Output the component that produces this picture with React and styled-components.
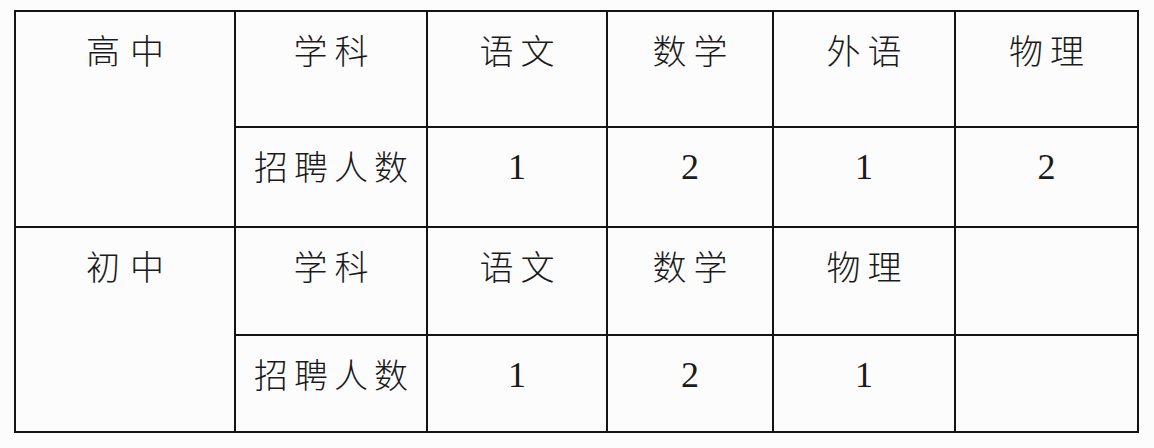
import React from "react";
import styled, { createGlobalStyle } from "styled-components";

const Global = createGlobalStyle`
  html, body { margin: 0; padding: 0; background: #fdfcfd; }
  body { width: 1154px; height: 448px; overflow: hidden; }
`;

const Page = styled.div`
  padding: 10px 0 0 14px;
`;

const Table = styled.table`
  border-collapse: collapse;
  table-layout: fixed;
  width: 1125px;
`;

const Col = styled.col`
  width: ${(p) => p.$w}px;
`;

const Row = styled.tr`
  height: ${(p) => p.$h}px;
`;

const Cell = styled.td`
  border: 2px solid #141414;
  padding: 18px 0 0 ${(p) => p.$ls}px;
  vertical-align: top;
  text-align: center;
  color: #1a1a1a;
  font-family: "Noto Sans CJK SC", "Noto Sans SC", sans-serif;
  font-weight: 300;
  font-size: 34px;
  line-height: 40px;
  letter-spacing: ${(p) => p.$ls}px;
  white-space: nowrap;
`;

const NumCell = styled.td`
  border: 2px solid #141414;
  padding: 19px 0 0 0;
  vertical-align: top;
  text-align: center;
  color: #1a1a1a;
  font-family: "Liberation Serif", "Noto Serif", serif;
  font-weight: 400;
  font-size: 36px;
  line-height: 40px;
`;

const widths = [220, 192, 180, 166, 182, 183];

const data = [
  {
    level: "高中",
    subjects: ["语文", "数学", "外语", "物理"],
    counts: ["1", "2", "1", "2"],
    h: [116, 100],
  },
  {
    level: "初中",
    subjects: ["语文", "数学", "物理", ""],
    counts: ["1", "2", "1", ""],
    h: [108, 97],
  },
];

export default function App() {
  return (
    <>
      <Global />
      <Page>
        <Table>
          <colgroup>
            {widths.map((w, i) => (
              <Col key={i} $w={w} />
            ))}
          </colgroup>
          <tbody>
            {data.map((g) => (
              <React.Fragment key={g.level}>
                <Row $h={g.h[0]}>
                  <Cell rowSpan={2} $ls={10}>{g.level}</Cell>
                  <Cell $ls={7}>学科</Cell>
                  {g.subjects.map((s, i) => (
                    <Cell key={i} $ls={7}>{s}</Cell>
                  ))}
                </Row>
                <Row $h={g.h[1]}>
                  <Cell $ls={6}>招聘人数</Cell>
                  {g.counts.map((c, i) => (
                    <NumCell key={i}>{c}</NumCell>
                  ))}
                </Row>
              </React.Fragment>
            ))}
          </tbody>
        </Table>
      </Page>
    </>
  );
}
